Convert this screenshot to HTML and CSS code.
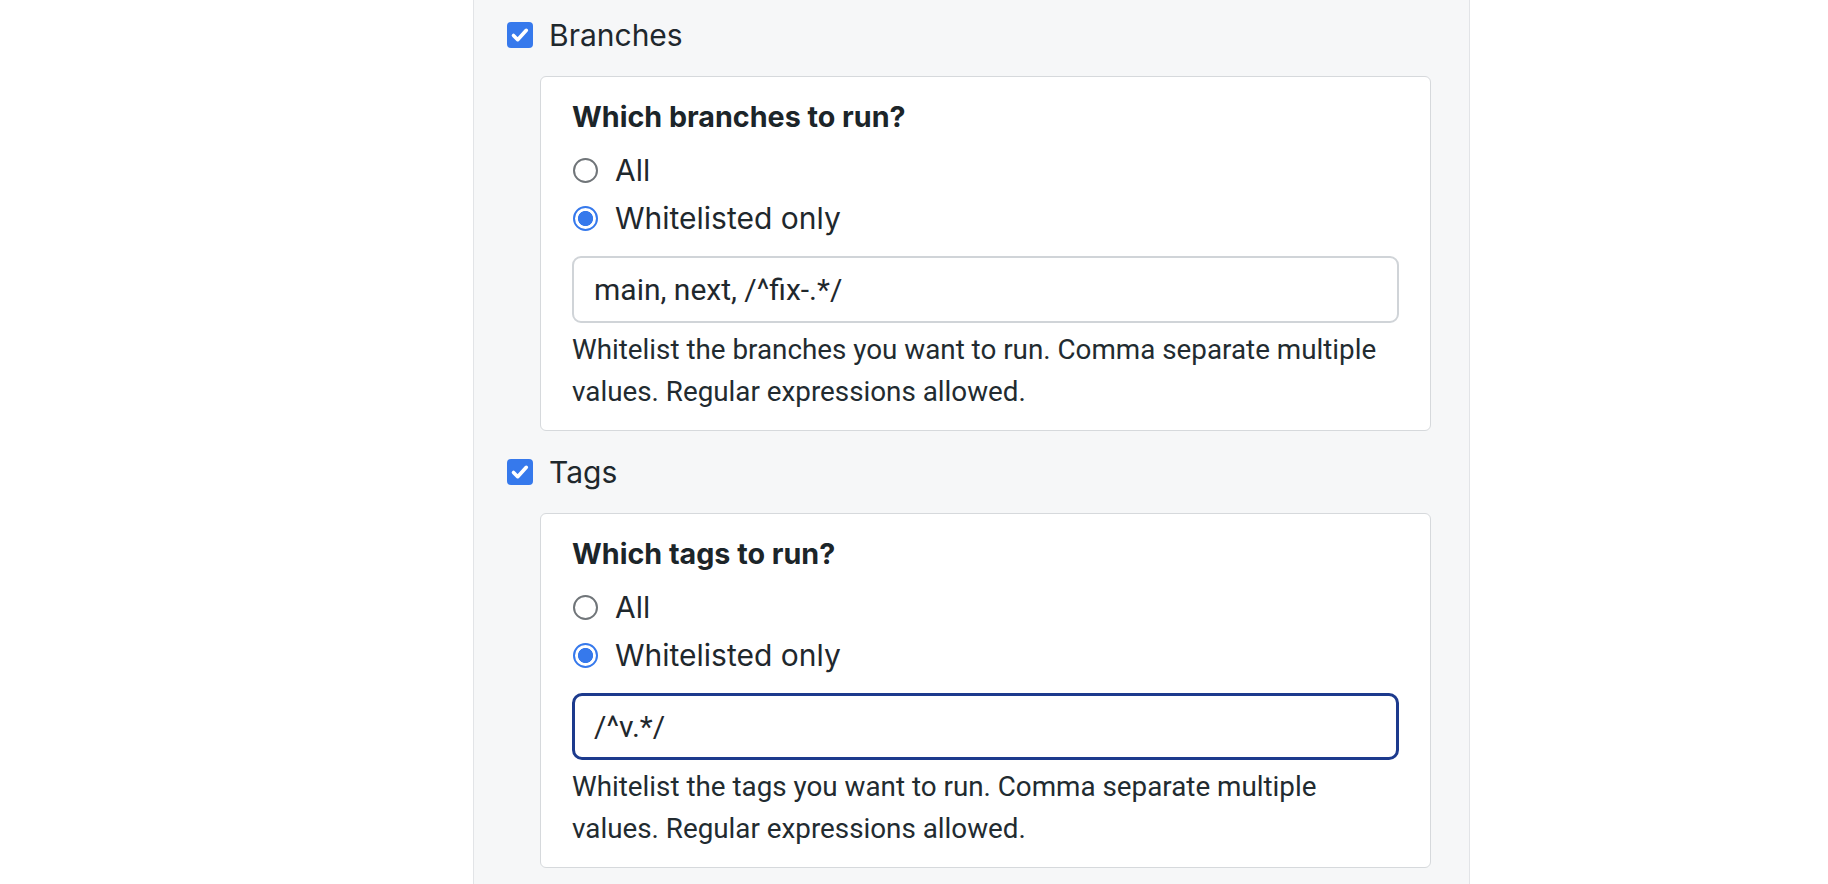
FILE: index.html
```html
<!DOCTYPE html>
<html lang="en">
<head>
<meta charset="utf-8">
<title>Run settings</title>
<link rel="stylesheet" href="styles.css">
</head>
<body>
<div class="panel">
  <label class="check-row">
    <span class="checkbox"><svg viewBox="0 0 26 26" width="26" height="26"><path d="M6.5 13.5l4.2 4.2 8.6-9.4" fill="none" stroke="#fff" stroke-width="3.6" stroke-linecap="round" stroke-linejoin="round"/></svg></span>
    <span class="check-label">Branches</span>
  </label>
  <div class="card">
    <div class="card-title">Which branches to run?</div>
    <div class="radio-row"><span class="radio"></span><span class="radio-label">All</span></div>
    <div class="radio-row"><span class="radio checked"></span><span class="radio-label">Whitelisted only</span></div>
    <div class="input">main, next, /^fix-.*/</div>
    <p class="help">Whitelist the branches you want to run. Comma separate multiple values. Regular expressions allowed.</p>
  </div>
  <label class="check-row">
    <span class="checkbox"><svg viewBox="0 0 26 26" width="26" height="26"><path d="M6.5 13.5l4.2 4.2 8.6-9.4" fill="none" stroke="#fff" stroke-width="3.6" stroke-linecap="round" stroke-linejoin="round"/></svg></span>
    <span class="check-label">Tags</span>
  </label>
  <div class="card">
    <div class="card-title">Which tags to run?</div>
    <div class="radio-row"><span class="radio"></span><span class="radio-label">All</span></div>
    <div class="radio-row"><span class="radio checked"></span><span class="radio-label">Whitelisted only</span></div>
    <div class="input focused">/^v.*/</div>
    <p class="help">Whitelist the tags you want to run. Comma separate multiple values. Regular expressions allowed.</p>
  </div>
</div>
</body>
</html>
```
FILE: styles.css
```css
html, body {
  margin: 0;
  padding: 0;
  background: #ffffff;
  color: #1f282d;
  font-family: "Inter", "Noto Sans", sans-serif;
}

.panel {
  box-sizing: border-box;
  margin-left: 473px;
  width: 997px;
  min-height: 884px;
  background: #f6f7f8;
  border-left: 1px solid #e2e4e7;
  border-right: 1px solid #e2e4e7;
  padding: 14px 38px 0 33px;
}

.check-row {
  display: flex;
  align-items: center;
  height: 42px;
  gap: 16px;
}

.card + .check-row {
  margin-top: 20px;
}

.checkbox {
  width: 26px;
  height: 26px;
  border-radius: 4px;
  background: #3679ec;
  display: flex;
  align-items: center;
  justify-content: center;
  flex: none;
}

.check-label {
  font-size: 30px;
  line-height: 42px;
}

.card {
  margin: 20px 0 0 33px;
  background: #ffffff;
  border: 1px solid #d6d9dc;
  border-radius: 6px;
  padding: 24px 31px 17px 31px;
}

.card-title {
  font-size: 28.7px;
  font-weight: 700;
  line-height: 32px;
  margin-bottom: 13px;
  color: #1c2529;
}

.radio-row {
  display: flex;
  align-items: center;
  height: 48px;
  gap: 17px;
}

.radio {
  box-sizing: border-box;
  width: 25px;
  height: 25px;
  border-radius: 50%;
  border: 2px solid #707579;
  background: #ffffff;
  flex: none;
  margin-left: 1px;
}

.radio.checked {
  border: 2px solid #3679ec;
  background: radial-gradient(circle, #3679ec 0, #3679ec 7.2px, #ffffff 7.9px);
}

.radio-label {
  font-size: 30px;
  line-height: 48px;
}

.input {
  box-sizing: border-box;
  margin-top: 14px;
  height: 67px;
  border: 2px solid #d0d4d8;
  border-radius: 9px;
  padding-left: 20px;
  display: flex;
  align-items: center;
  font-family: "Roboto", "Liberation Sans", sans-serif;
  font-size: 30px;
  background: #ffffff;
}

.input.focused {
  border: 3px solid #1c3a8d;
  border-radius: 10px;
  padding-left: 19px;
}

.help {
  margin: 6px 0 0 0;
  font-family: "Roboto", "Liberation Sans", sans-serif;
  font-size: 27.8px;
  line-height: 42px;
  color: #222b30;
}
```
